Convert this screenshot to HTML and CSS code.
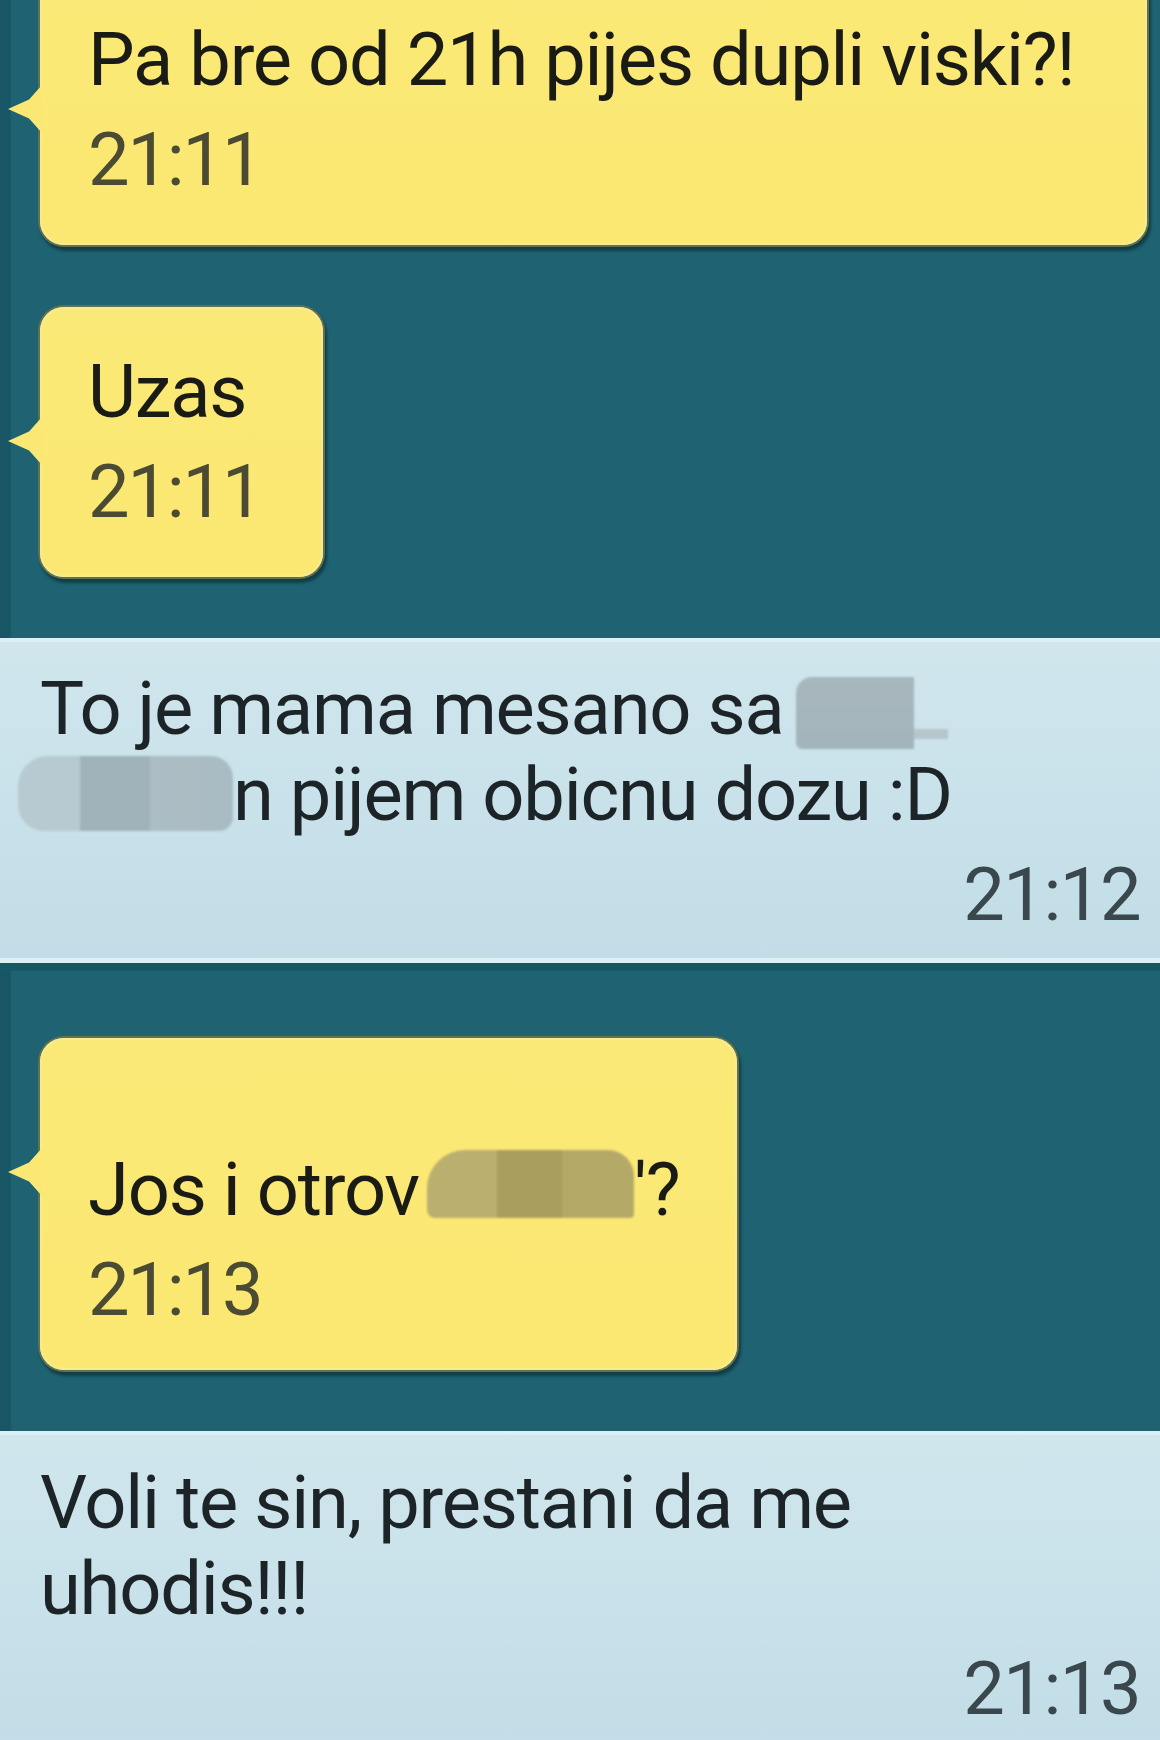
FILE: index.html
```html
<!DOCTYPE html>
<html lang="sr">
<head>
<meta charset="utf-8">
<title>Chat</title>
<link rel="stylesheet" href="styles.css">
</head>
<body>
<div class="chat">
  <section class="thread thread--first">
    <div class="bubble bubble--wide">
      <p class="msg">Pa bre od 21h pijes dupli viski?!</p>
      <p class="time">21:11</p>
    </div>
    <div class="bubble bubble--small">
      <p class="msg">Uzas</p>
      <p class="time">21:11</p>
    </div>
  </section>

  <section class="incoming incoming--first">
    <p class="in-msg">To je mama mesano sa<span class="redact redact--a"></span><br><span class="redact redact--b"></span>n pijem obicnu dozu :D</p>
    <p class="in-time">21:12</p>
  </section>

  <section class="thread thread--mid">
    <div class="bubble bubble--medium">
      <p class="msg">Jos i otrov<span class="redact redact--c"></span>'?</p>
      <p class="time">21:13</p>
    </div>
  </section>

  <section class="incoming incoming--last">
    <p class="in-msg">Voli te sin, prestani da me<br>uhodis!!!</p>
    <p class="in-time">21:13</p>
  </section>
</div>
</body>
</html>
```

FILE: styles.css
```css
* { box-sizing: border-box; }

html, body {
  margin: 0;
  padding: 0;
}

body {
  width: 1160px;
  height: 1740px;
  overflow: hidden;
  background: #1f6372;
  font-family: Roboto, "Liberation Sans", Arial, sans-serif;
}

.chat {
  display: flex;
  flex-direction: column;
}

p { margin: 0; }

/* teal thread areas with the yellow outgoing bubbles */
.thread {
  display: flex;
  flex-direction: column;
  align-items: flex-start;
  gap: 62px;
  background: linear-gradient(to right, #195665 0, #195665 10px, #1f6372 12px, #1f6372 100%);
}

.thread--first {
  padding-bottom: 61px;
}

.thread--mid {
  padding-top: 67px;
  padding-bottom: 61px;
  border-top: 8px solid #175867;
}

.bubble {
  position: relative;
  margin-left: 40px;
  padding: 35px 40px 35px 48px;
  background: linear-gradient(#fbe977, #fbe872);
  border-radius: 24px;
  box-shadow: inset 0 0 0 2px #f3ec95, 0 0 0 2px #66704a, 2px 4px 3px 2px rgba(6, 38, 45, 0.6);
}

.bubble::before {
  content: "";
  position: absolute;
  left: -32px;
  top: 110px;
  width: 34px;
  height: 48px;
  background: #fbe874;
  clip-path: polygon(100% 0, 62% 30%, 0 50%, 62% 70%, 100% 100%);
}

.bubble--wide {
  width: 1107px;
  margin-top: -25px;
}

.bubble--small {
  width: 283px;
}

.bubble--medium {
  width: 697px;
  padding-top: 102px;
  padding-bottom: 30px;
}

.msg {
  font-size: 74px;
  line-height: 100px;
  letter-spacing: -1.2px;
  color: #1b1b16;
  white-space: nowrap;
}

.time {
  font-size: 74px;
  line-height: 100px;
  letter-spacing: -2.2px;
  color: #4b4a33;
}

/* light blue incoming rows */
.incoming {
  background: linear-gradient(#d0e6ed, #c2dde7);
  padding: 24px 20px 0 40px;
  border-top: 4px solid #dbeff5;
}

.incoming--first {
  padding-bottom: 13px;
  border-bottom: 5px solid #dff0f5;
}

.incoming--last {
  height: 317px;
  padding-top: 25px;
}

.in-msg {
  font-size: 74px;
  line-height: 86px;
  letter-spacing: -1.2px;
  color: #1d2428;
  white-space: nowrap;
}

.in-time {
  margin-top: 7px;
  font-size: 74px;
  line-height: 100px;
  letter-spacing: -1.5px;
  text-align: right;
  color: #3a474c;
}

/* blurred-out names */
.redact {
  display: inline-block;
  filter: blur(1.2px);
}

.redact--a {
  width: 152px;
  height: 72px;
  margin-left: 12px;
  vertical-align: -15px;
  border-radius: 16px 12px 4px 6px;
  background:
    linear-gradient(#a7b7bd, #a3b4ba) 0 0 / 118px 100% no-repeat,
    linear-gradient(#b6c6cc, #b6c6cc) 100% 52px / 40px 10px no-repeat;
}

.redact--b {
  width: 215px;
  height: 75px;
  margin-left: -22px;
  vertical-align: -11px;
  border-radius: 30px 22px 14px 26px;
  background: linear-gradient(to right, #b8cad1 0, #b8cad1 62px, #a0b3bb 62px, #a0b3bb 132px, #acbdc4 132px, #aabcc3 100%);
}

.redact--c {
  width: 207px;
  height: 68px;
  margin-left: 8px;
  vertical-align: -3px;
  border-radius: 38px 26px 4px 8px;
  background: linear-gradient(to right, #bbaf6f 0, #bbaf6f 70px, #aa9e5e 70px, #aa9e5e 135px, #b5a968 135px, #b5a968 100%);
}
```
